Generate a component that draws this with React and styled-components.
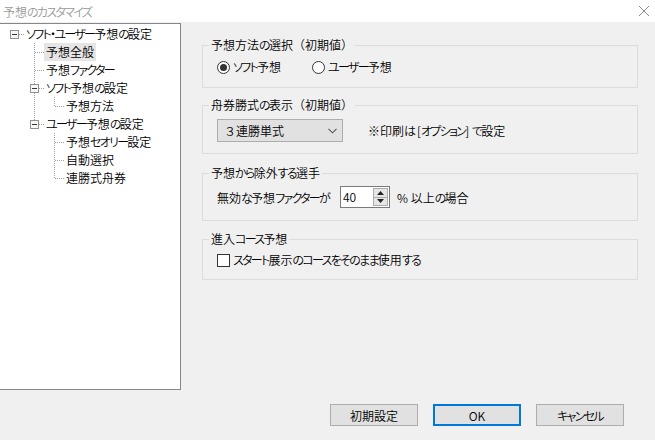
import React from "react";
import styled, { createGlobalStyle } from "styled-components";

const Global = createGlobalStyle`
  html, body { margin: 0; padding: 0; background: #f0f0f0; }
  body {
    font-family: "Noto Sans CJK JP", "Noto Sans", sans-serif;
    font-size: 12px;
    font-weight: 350;
    color: #000;
    font-feature-settings: "palt";
  }
  * { box-sizing: border-box; }
`;

const Kana = styled.span`
  letter-spacing: -1.7px;
`;

const FullPunct = styled.span`
  font-feature-settings: normal;
`;

const KANA_RE = /^[\u3040-\u30ff]+$/;
const PUNCT_RE = /^[（）]+$/;
const SPLIT_RE = /([\u3040-\u30ff]+|[（）]+)/;

function jp(text) {
  return text
    .split(SPLIT_RE)
    .filter(Boolean)
    .map((part, i) =>
      KANA_RE.test(part) ? (
        <Kana key={i}>{part}</Kana>
      ) : PUNCT_RE.test(part) ? (
        <FullPunct key={i}>{part}</FullPunct>
      ) : (
        part
      )
    );
}

const Window = styled.div`
  width: 655px;
  height: 440px;
  background: #f0f0f0;
  display: flex;
  flex-direction: column;
  overflow: hidden;
`;

const TitleBar = styled.div`
  height: 22px;
  background: #fff;
  display: flex;
  align-items: center;
  justify-content: space-between;
  padding: 0 5px 0 3px;
  color: #999;
  font-size: 12px;
`;

const Main = styled.div`
  margin-top: 1px;
  height: 367px;
  display: flex;
`;

const TreePanel = styled.div`
  width: 181px;
  height: 100%;
  background: #fff;
  border-top: 1px solid #828790;
  border-right: 1px solid #828790;
  border-bottom: 1px solid #828790;
  padding: 1px 0 0 4px;
  display: flex;
  flex-direction: column;
`;

const TreeRow = styled.div`
  height: 18px;
  display: flex;
  align-items: center;
`;

const TreeCell = styled.svg`
  width: 20px;
  height: 18px;
  flex: none;
  display: block;
`;

const TreeLabel = styled.span`
  padding: 0 2px;
  line-height: 18px;
  white-space: nowrap;
  background: ${(p) => (p.$selected ? "#e5e5e5" : "transparent")};
`;

const Pane = styled.div`
  flex: 1;
  padding: 22px 17px 0 21px;
  display: flex;
  flex-direction: column;
`;

const Group = styled.div`
  border: 1px solid #dcdcdc;
  margin-top: ${(p) => p.$mt}px;
  padding: 0 0 ${(p) => p.$pb}px 14px;
  display: flex;
  flex-direction: column;
`;

const Legend = styled.div`
  align-self: flex-start;
  margin: -9px 0 0 -8px;
  padding: 0 2px;
  line-height: 16px;
  background: #f0f0f0;
`;

const Row = styled.div`
  margin-top: ${(p) => p.$mt}px;
  display: flex;
  align-items: center;
  min-height: 18px;
`;

const Option = styled.label`
  display: flex;
  align-items: center;
  gap: 3px;
  line-height: 18px;
  width: ${(p) => (p.$w ? p.$w + "px" : "auto")};
`;

const RadioCircle = styled.span`
  width: 13px;
  height: 13px;
  border-radius: 50%;
  border: 1px solid #333;
  background: #fff;
  display: flex;
  align-items: center;
  justify-content: center;
  flex: none;
  &::after {
    content: "";
    width: 7px;
    height: 7px;
    border-radius: 50%;
    background: ${(p) => (p.$checked ? "#333" : "transparent")};
  }
`;

const CheckBox = styled.span`
  width: 13px;
  height: 13px;
  border: 1px solid #333;
  background: #fff;
  flex: none;
`;

const Select = styled.div`
  width: 126px;
  height: 23px;
  background: #e1e1e1;
  border: 1px solid #adadad;
  display: flex;
  align-items: center;
  justify-content: space-between;
  padding: 0 5px 0 6px;
  flex: none;
`;

const SelectText = styled.span`
  font-feature-settings: normal;
`;

const Note = styled.span`
  margin-left: 25px;
`;

const SpinBox = styled.div`
  margin-left: 11px;
  width: 50px;
  height: 22px;
  background: #fff;
  border: 1px solid #7a7a7a;
  display: flex;
  align-items: center;
  justify-content: space-between;
  padding: 0 1px 0 2px;
`;

const SpinValue = styled.span`
  line-height: 18px;
`;

const SpinButtons = styled.div`
  width: 15px;
  height: 18px;
  display: flex;
  flex-direction: column;
  border: 1px solid #acacac;
`;

const SpinButton = styled.div`
  flex: 1;
  background: #e6e6e6;
  display: flex;
  align-items: center;
  justify-content: center;
  & + & { border-top: 1px solid #acacac; }
`;

const Suffix = styled.span`
  margin-left: 7px;
`;

const Footer = styled.div`
  padding: 14px 31px 0 0;
  display: flex;
  justify-content: flex-end;
  gap: 15px;
`;

const Button = styled.button`
  width: 88px;
  height: 22px;
  background: #e1e1e1;
  border: ${(p) => (p.$default ? "2px solid #0078d7" : "1px solid #adadad")};
  font-family: inherit;
  font-size: 12px;
  font-weight: 350;
  font-feature-settings: "palt";
  color: #000;
  padding: 0;
  display: flex;
  align-items: center;
  justify-content: center;
`;

const DOT = "#a0a0a0";

function Cell({ kind, expander, isLast }) {
  return (
    <TreeCell viewBox="0 0 20 18">
      {kind === "guide" && (
        <line x1="10.5" y1="0" x2="10.5" y2="18" stroke={DOT} strokeDasharray="1 1" />
      )}
      {kind === "node" && (
        <>
          <line x1="10.5" y1="0" x2="10.5" y2={isLast ? 10 : 18} stroke={DOT} strokeDasharray="1 1" />
          <line x1="11" y1="9.5" x2="20" y2="9.5" stroke={DOT} strokeDasharray="1 1" />
        </>
      )}
      {kind === "root" && (
        <line x1="15" y1="9.5" x2="20" y2="9.5" stroke={DOT} strokeDasharray="1 1" />
      )}
      {expander && (
        <>
          <rect x="6.5" y="5.5" width="8" height="8" fill="#f7f7f7" stroke="#919191" />
          <line x1="8" y1="9.5" x2="13" y2="9.5" stroke="#333" />
        </>
      )}
    </TreeCell>
  );
}

const tree = [
  {
    label: "ソフト・ユーザー予想の設定",
    children: [
      { label: "予想全般", selected: true },
      { label: "予想ファクター" },
      { label: "ソフト予想の設定", children: [{ label: "予想方法" }] },
      {
        label: "ユーザー予想の設定",
        children: [{ label: "予想セオリー設定" }, { label: "自動選択" }, { label: "連勝式舟券" }],
      },
    ],
  },
];

function flatten(nodes, level, guides, out) {
  nodes.forEach((n, i) => {
    const isLast = i === nodes.length - 1;
    out.push({ ...n, level, guides, isLast });
    if (n.children) flatten(n.children, level + 1, level === 0 ? [false] : [...guides, !isLast], out);
  });
  return out;
}

const rows = flatten(tree, 0, [], []);

function CloseIcon() {
  return (
    <svg width="12" height="12" viewBox="0 0 12 12">
      <path d="M1 1 L11 11 M11 1 L1 11" stroke="#8a8a8a" strokeWidth="1" fill="none" />
    </svg>
  );
}

function Chevron() {
  return (
    <svg width="9" height="6" viewBox="0 0 9 6">
      <path d="M0.5 0.8 L4.5 4.8 L8.5 0.8" stroke="#555" strokeWidth="1.1" fill="none" />
    </svg>
  );
}

function Arrow({ up }) {
  return (
    <svg width="7" height="4" viewBox="0 0 7 4">
      <path d={up ? "M0 4 L3.5 0 L7 4 Z" : "M0 0 L3.5 4 L7 0 Z"} fill="#222" />
    </svg>
  );
}

export default function App() {
  return (
    <>
      <Global />
      <Window>
        <TitleBar>
          <span>{jp("予想のカスタマイズ")}</span>
          <CloseIcon />
        </TitleBar>
        <Main>
          <TreePanel>
            {rows.map((r, idx) => (
              <TreeRow key={idx}>
                {r.guides.map((g, gi) => (
                  <Cell key={gi} kind={g ? "guide" : "empty"} />
                ))}
                <Cell kind={r.level === 0 ? "root" : "node"} expander={!!r.children} isLast={r.isLast} />
                <TreeLabel $selected={r.selected}>{jp(r.label)}</TreeLabel>
              </TreeRow>
            ))}
          </TreePanel>
          <Pane>
            <Group $mt={0} $pb={11}>
              <Legend>{jp("予想方法の選択（初期値）")}</Legend>
              <Row $mt={5}>
                <Option $w={95}>
                  <RadioCircle $checked />
                  <span>{jp("ソフト予想")}</span>
                </Option>
                <Option>
                  <RadioCircle />
                  <span>{jp("ユーザー予想")}</span>
                </Option>
              </Row>
            </Group>
            <Group $mt={17} $pb={11}>
              <Legend>{jp("舟券勝式の表示（初期値）")}</Legend>
              <Row $mt={6}>
                <Select>
                  <SelectText>３連勝単式</SelectText>
                  <Chevron />
                </Select>
                <Note>{jp("※印刷は [オプション] で設定")}</Note>
              </Row>
            </Group>
            <Group $mt={19} $pb={12}>
              <Legend>{jp("予想から除外する選手")}</Legend>
              <Row $mt={5}>
                <span>{jp("無効な予想ファクターが")}</span>
                <SpinBox>
                  <SpinValue>40</SpinValue>
                  <SpinButtons>
                    <SpinButton>
                      <Arrow up />
                    </SpinButton>
                    <SpinButton>
                      <Arrow />
                    </SpinButton>
                  </SpinButtons>
                </SpinBox>
                <Suffix>{jp("% 以上の場合")}</Suffix>
              </Row>
            </Group>
            <Group $mt={18} $pb={10}>
              <Legend>{jp("進入コース予想")}</Legend>
              <Row $mt={4}>
                <Option>
                  <CheckBox />
                  <span>{jp("スタート展示のコースをそのまま使用する")}</span>
                </Option>
              </Row>
            </Group>
          </Pane>
        </Main>
        <Footer>
          <Button>{jp("初期設定")}</Button>
          <Button $default>OK</Button>
          <Button>{jp("キャンセル")}</Button>
        </Footer>
      </Window>
    </>
  );
}
